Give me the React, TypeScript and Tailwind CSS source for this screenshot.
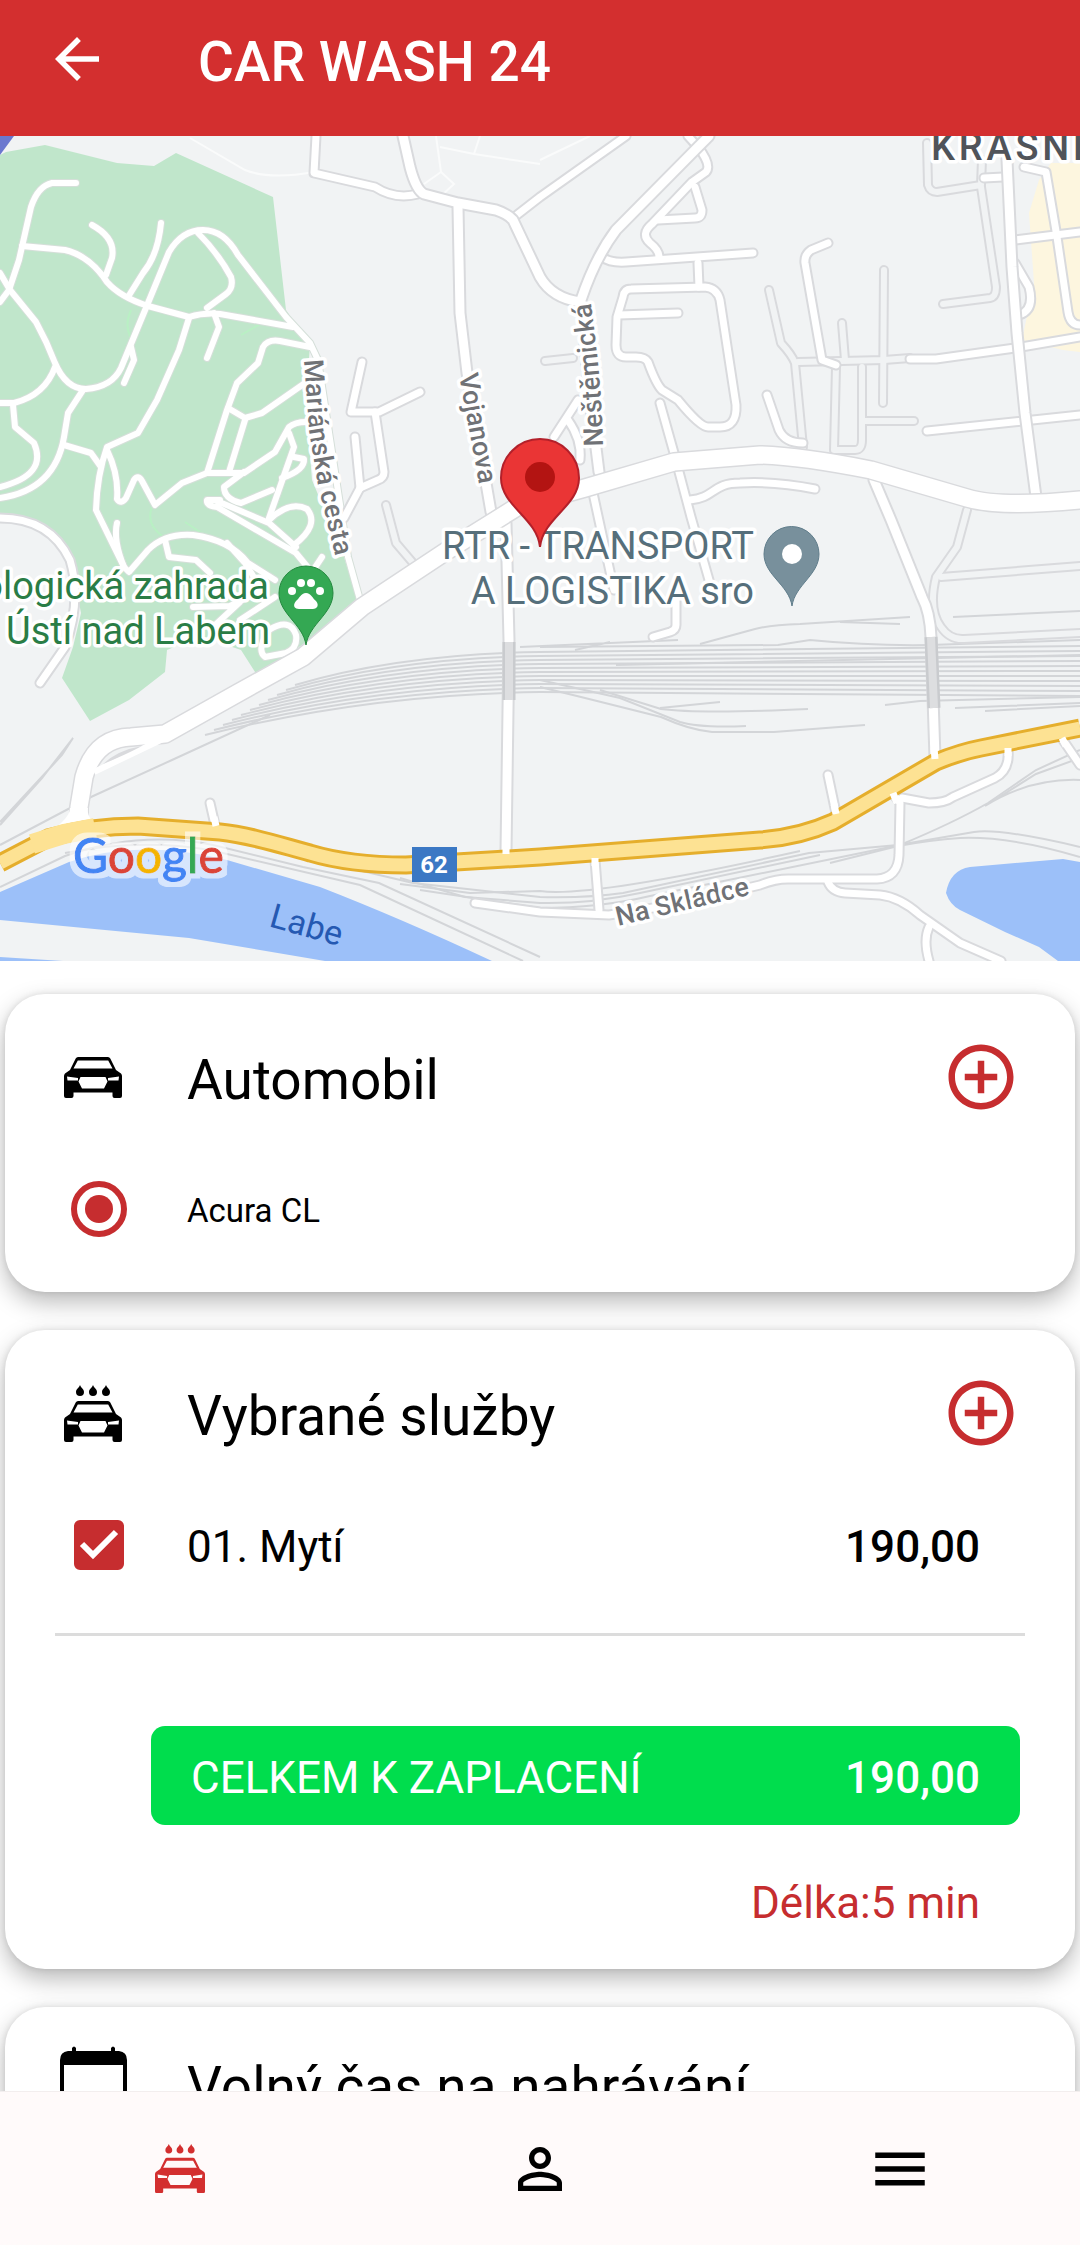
import React, { useState } from 'react';
import { MdAddCircleOutline, MdArrowBack, MdMenu, MdPersonOutline } from 'react-icons/md';

const CAR_PATH =
  'M11.7 1.5Q12.5 0 14 0H44Q45.5 0 46.3 1.5L52 13L57 16.5Q58 17.5 58 19V39Q58 41 56 41H50.5Q48.5 41 48.5 39V35.5H9.5V39Q9.5 41 7.5 41H2Q0 41 0 39V19Q0 17.5 1 16.5L6 13ZM13.8 3.5L9.5 11.5H48.5L44.2 3.5ZM3 19.5L3.5 23.5H14V21ZM55 19.5L54.5 23.5H44V21ZM16.5 20L14.5 24.5L18 31.5H40L43.5 24.5L41.5 20Z';

const PARK =
  'M0 155L6 152L45 145L117 163L154 166L176 153L273 197L286 310L310 345L306 400L312 480L344 557L358 602L320 633L257 675L241 650L200 636L167 650L165 672L129 700L90 721L62 678L73 647L81 613L74 577L62 547L34 523L0 517Z';

const WATER = [
  'M0 892L69 862Q140 838 227 860L320 887Q400 918 492 961H325L189 938L0 920Z',
  'M0 957L63 961H0Z',
  'M1080 862L1063 859L970 867Q950 870 946 893Q950 905 960 910L1005 932L1039 947L1058 961H1080Z'
];

const PARK_ROADS = [
  'M76 183H52Q38 186 31 207L19 260L10 287',
  'M22 246L65 250Q90 256 107 282Q120 297 148 306L189 317Q205 312 220 314L293 327',
  'M92 225Q116 238 112 258L106 275',
  'M161 223Q158 255 143 273L128 297',
  'M0 273L10 290L36 322Q47 342 55 363Q66 389 86 389Q112 387 121 368L148 303L169 252Q182 230 203 230Q224 230 238 255L286 317L310 343L318 360L348 557L360 600',
  'M0 302L9 290',
  'M198 233Q218 253 231 277Q234 288 226 294L207 308',
  'M189 318L179 350L157 400L138 433L107 447Q97 475 96 510L124 567L129 572L148 550Q165 533 193 535Q230 540 248 563L275 580',
  'M83 390L68 413L64 437Q55 490 0 498',
  'M55 367Q45 395 14 403H0',
  'M13 405L15 427L34 443Q48 475 0 487',
  'M64 445L91 453L101 467',
  'M107 450Q119 475 117 499Q121 505 126 498L134 480Q138 474 142 481L155 505L182 483L207 473H244L275 452L289 427Q295 422 306 422',
  'M207 473L227 410L237 383L258 363L263 347Q268 339 280 341L310 347',
  'M228 408L245 418L262 413L305 383',
  'M245 420L229 472',
  'M289 433L294 447L269 518',
  'M294 457L304 459Q305 470 282 478',
  'M244 472L224 487Q224 499 241 503L272 490',
  'M269 520Q290 500 307 509Q320 525 294 545',
  'M220 500L207 500Q206 506 217 507L296 553L310 570M217 501L269 523L296 547',
  'M117 523Q113 540 124 567',
  'M165 540L169 557L196 560L210 573',
  'M227 543L245 563L262 590',
  'M193 607L230 606L262 590M213 627L240 602M240 620L275 597',
  'M269 630Q290 617 296 635Q298 648 286 653L265 657Q256 650 269 630',
  'M322 557L312 572',
  'M214 313L219 327L207 358',
  'M131 347L134 360L124 383'
];

const STREETS = [
  'M0 518Q50 518 70 560Q82 600 65 647L40 683',
  'M316 136L314 173L375 187Q395 200 418 194',
  'M540 197L513 218M540 197L626 136',
  'M688 136L698 147Q712 165 706 172L692 182L652 224Q640 234 650 243Q659 250 659 257',
  'M695 187L702 210Q702 218 695 218L658 220',
  'M602 257Q610 263 626 262L753 253',
  'M698 263L699 287',
  'M617 317L623 297Q624 289 631 289L705 287Q717 288 720 300L736 405Q737 427 720 427H708Q700 427 678 400L662 390Q656 384 648 362Q645 357 636 357H626Q616 357 616 345Z',
  'M619 315L678 313',
  'M660 403L674 453L691 517L709 580',
  'M690 500C715 498 712 483 740 483Q775 481 815 489',
  'M593 493L614 590',
  'M676 600V625Q676 630 670 632L653 637',
  'M1024 167L1046 172L1057 237L1068 312Q1070 325 1080 325',
  'M984 178L1003 177',
  'M1015 263L1029 287Q1035 310 1019 315',
  'M828 243L811 250Q804 255 805 263L822 360L836 365',
  'M910 359L936 359L1015 348L1080 337',
  'M1015 240L1080 232',
  'M767 395L779 430Q785 443 803 443',
  'M927 431L1080 415',
  'M362 362L351 412H379L420 392',
  'M375 412L384 472Q384 478 378 480L360 488L344 518',
  'M355 437L360 488',
  'M578 400L554 437M568 420Q582 440 580 460',
  'M210 803L215 825',
  'M828 775L836 813',
  'M595 860L599 910',
  'M475 903L540 912L609 915Q680 905 760 885Q775 879 788 879H877Q898 878 899 855L900 803L894 795',
  'M902 798L929 803Q945 803 953 797L995 778Q1010 770 1008 750',
  'M828 882Q832 892 845 893L880 895Q900 897 920 915L960 943L1001 961',
  'M929 927Q923 940 929 961',
  'M1063 740L1080 765'
];

const WIDE_STREETS = [
  'M403 136L410 167Q416 190 424 194L458 203L496 210Q508 214 513 220L540 277Q552 298 580 302',
  'M458 207L460 313L467 373L491 512',
  'M709 136L698 147L616 230Q595 258 581 300L590 400L599 472',
  'M1007 160L1012 267L1017 333L1025 413L1036 497',
  'M874 480L891 520L922 597Q930 612 931 637L935 758',
  'M506 523L509 640L506 852'
];

// Service roads drawn in the same tone as the ground
const PALE_STREETS = [
  'M545 361L573 358',
  'M927 143L928 185Q930 192 937 192L981 185L982 160',
  'M981 187L996 287Q996 297 990 298L943 304',
  'M769 290L781 343Q792 355 795 363L803 447',
  'M798 362L884 360L910 358',
  'M884 270L883 403',
  'M842 323L845 360',
  'M836 367L834 450H855Q862 450 862 440V367',
  'M864 421L914 421',
  'M967 510L957 547L936 577Q928 610 941 627Q950 640 964 639L1080 633',
  'M941 577L1080 566',
  'M386 505L396 543L413 563'
];

const MAIN_ROAD =
  'M79 827V807L84 777Q95 738 131 737L165 734L238 693L303 657L362 607L448 550L517 507L585 488L674 462L760 455Q800 456 871 470L967 498Q1000 508 1080 500';

const HIGHWAY =
  'M0 863L48 838Q90 826 138 826L220 832C250 835 280 845 310 853Q350 865 406 865L540 857L760 840Q800 837 833 822L936 762Q960 752 981 748L1080 728';

const RAILS = [
  'M0 845L91 797L172 760L270 715',
  'M73 738L42 778L0 825M73 738L62 755L0 822',
  'M0 887L65 856Q140 830 213 845L303 867L379 883L540 957',
  'M65 853Q140 838 210 850L360 885L523 961',
  'M303 857L413 883L540 897Q590 898 623 893L809 853L898 845L974 832Q1000 828 1080 847',
  'M400 878L465 897L540 903Q590 904 640 893L820 855M830 863L898 846Q930 840 960 838Q1010 836 1080 857',
  'M400 884L470 893L540 891Q590 898 800 851',
  'M420 890L540 908Q600 908 650 896L900 845Q953 823 988 803L1036 770L1080 750',
  'M985 806L1036 774L1080 758M985 806Q1030 778 1080 780',
  'M540 687L581 697L661 717Q690 730 712 732H774L865 725',
  'M540 680L620 698L680 722Q700 728 746 726',
  'M600 690L661 709Q700 714 808 709',
  'M660 708L720 702',
  'M520 647L678 640M575 650L610 642',
  'M700 644L755 629Q770 625 800 624L910 617M840 622L900 624',
  'M540 647L778 645L810 640Q870 646 930 645L1080 640',
  'M953 617L1080 611',
  'M616 665L1080 655',
  'M885 705L920 701L1080 697',
  'M955 708L1080 703M985 711L1080 706'
];

// Yard tracks fan out from one point at the western end
const YARD = Array.from({ length: 11 }, (_, i) => {
  const x = 205 + i * 9;
  const y = 735 - i * 5;
  return `M${x} ${y}Q${370 + i * 3} ${694 - i * 4} 540 ${692 - i * 4}L1080 ${696 - i * 5}`;
});

function Roads({ paths, width, casing, fill = '#ffffff', edge = '#d9dadd' }: {
  paths: string[];
  width: number;
  casing: number;
  fill?: string;
  edge?: string;
}) {
  return (
    <g fill="none" strokeLinecap="round" strokeLinejoin="round">
      {paths.map(d => <path key={d} d={d} stroke={edge} strokeWidth={casing} />)}
      {paths.map(d => <path key={d} d={d} stroke={fill} strokeWidth={width} />)}
    </g>
  );
}

function PlaceMap() {
  return (
    <svg
      className="block w-full h-[825px] shrink-0 bg-[#f1f3f4] font-[Roboto,sans-serif]"
      viewBox="0 136 1080 825"
      preserveAspectRatio="xMidYMid slice"
      role="img"
      aria-label="Mapa"
    >
      <defs>
        <filter id="halo" x="-10%" y="-20%" width="120%" height="140%">
          <feMorphology in="SourceAlpha" operator="dilate" radius="5" result="grown" />
          <feFlood floodColor="#ffffff" floodOpacity="0.6" />
          <feComposite in2="grown" operator="in" result="rim" />
          <feMerge>
            <feMergeNode in="rim" />
            <feMergeNode in="SourceGraphic" />
          </feMerge>
        </filter>
      </defs>

      <path d={PARK} fill="#c0e6cb" />
      <path d="M1051 163H1080V352L1063 350L1022 340L1034 283L1029 213L1039 180Z" fill="#fdf6df" />
      {WATER.map(d => <path key={d} d={d} fill="#9cc0f9" />)}
      <path d="M0 136H14L0 155Z" fill="#6b78cf" />

      {/* Footpaths */}
      <g fill="none" stroke="#fafbfb" strokeWidth="2">
        <path d="M190 138L245 170Q270 180 314 172" />
        <path d="M436 136L441 172L454 184L441 196M424 184L441 172M440 147L474 154L540 164M474 154L480 136M540 160L590 136" />
      </g>
      <g fill="none" stroke="#b9f0c4" strokeWidth="2">
        <path d="M131 310Q124 325 131 338M262 323L241 335" />
        <path d="M152 507Q145 525 165 538M185 522L212 540" />
      </g>

      <g fill="none" stroke="#d3d5d8" strokeWidth="2">
        {RAILS.map(d => <path key={d} d={d} />)}
        {YARD.map(d => <path key={d} d={d} />)}
      </g>

      <Roads paths={PALE_STREETS} width={6} casing={10} fill="#f1f3f4" />
      <Roads paths={PARK_ROADS} width={6} casing={8} edge="#d5dfd9" />
      <Roads paths={STREETS} width={7} casing={11} />
      <Roads paths={WIDE_STREETS} width={9} casing={13} />
      <path d="M509 642V700M931 637L934 708" stroke="#c9cbce" strokeWidth="13" />
      <path d="M509 642V700M931 637L934 708" stroke="#dddee0" strokeWidth="8" />
      <Roads paths={[MAIN_ROAD]} width={17} casing={20} />
      <path d="M94 772L165 738" stroke="#ffffff" strokeWidth="6" />
      <path d="M103 764Q118 750 142 746Q125 755 103 764Z" fill="#d9dadd" />
      <path d="M32 842Q70 822 70 808H88Q86 816 98 828Z" fill="#ffffff" />

      <path d={HIGHWAY} fill="none" stroke="#e5ae2c" strokeWidth="19" />
      <path d={HIGHWAY} fill="none" stroke="#fde293" strokeWidth="13" />
      <path d="M32 844L64 834L95 828" fill="none" stroke="#fde293" strokeWidth="20" />
      <g stroke="#ffffff" strokeWidth="7">
        <path d="M214 817L216 826M834 804L836 814M506 845V854M934 748L935 759M595 858V866M893 793L897 803M1008 748V756M1062 738L1066 746" />
      </g>

      <g fill="none">
        <path id="marianska" d="M304 360L309 430L318 485L340 575" />
        <path id="vojanova" d="M459 375L482 500" />
        <path id="nestemicka" d="M603 446Q602 380 589 290" />
        <path id="skladce" d="M618 926L770 890" />
        <path id="labe" d="M268 926L360 952" />
      </g>
      <g
        fill="#707276"
        stroke="#ffffff"
        strokeWidth="7"
        strokeLinejoin="round"
        className="text-[27px] font-medium [paint-order:stroke]"
      >
        <text><textPath href="#marianska">Mariánská cesta</textPath></text>
        <text><textPath href="#vojanova">Vojanova</textPath></text>
        <text><textPath href="#nestemicka">Neštěmická</textPath></text>
        <text><textPath href="#skladce">Na Skládce</textPath></text>
      </g>
      <text fill="#2559b2" className="text-[34px]"><textPath href="#labe">Labe</textPath></text>

      <g stroke="#ffffff" strokeWidth="7" strokeLinejoin="round" className="text-[38px] [paint-order:stroke]">
        <text x="931" y="160" fill="#50545a" className="font-medium tracking-widest">KRÁSNÉ</text>
        <g fill="#566f7b" textAnchor="end">
          <text x="754" y="559">RTR - TRANSPORT</text>
          <text x="754" y="604">A LOGISTIKA sro</text>
        </g>
        <g fill="#2a7d46" textAnchor="end">
          <text x="269" y="599">Zoologická zahrada</text>
          <text x="270" y="644">Ústí nad Labem</text>
        </g>
      </g>

      <rect x="412" y="847" width="45" height="35" fill="#3b78c4" />
      <text x="434" y="873" fill="#ffffff" textAnchor="middle" className="text-[24px] font-bold">62</text>

      {/* Zoo */}
      <path d="M306 645C303 624 279 614 279 593A27 27 0 0 1 333 593C333 614 309 624 306 645Z" fill="#34a853" stroke="#23883e" />
      <g fill="#ffffff">
        <circle cx="292" cy="591" r="4" />
        <circle cx="301" cy="583" r="4" />
        <circle cx="311" cy="583" r="4" />
        <circle cx="320" cy="591" r="4" />
        <path d="M306 593C311 593 313 599 316 601C320 606 316 609 313 609H299C295 609 292 606 296 601C299 599 301 593 306 593Z" />
      </g>

      {/* Company */}
      <path d="M792 606C789 585 764 575 764 554A27 27 0 0 1 819 554C819 575 795 585 792 606Z" fill="#78909c" stroke="#607d8b" />
      <circle cx="792" cy="554" r="10" fill="#ffffff" />

      {/* Wash location */}
      <path d="M540 547C537 518 501 506 501 478A39 39 0 0 1 579 478C579 506 543 518 540 547Z" fill="#ea3535" stroke="#b3202a" strokeWidth="2" />
      <circle cx="540" cy="477" r="15" fill="#b31412" />

      <text x="73" y="873" strokeWidth="1" filter="url(#halo)" className="text-[48px] font-[Lato,sans-serif]">
        <tspan fill="#4285f4" stroke="#4285f4">G</tspan>
        <tspan fill="#db4437" stroke="#db4437">o</tspan>
        <tspan fill="#f4b400" stroke="#f4b400">o</tspan>
        <tspan fill="#4285f4" stroke="#4285f4">g</tspan>
        <tspan fill="#34a853" stroke="#34a853">l</tspan>
        <tspan fill="#db4437" stroke="#db4437">e</tspan>
      </text>
    </svg>
  );
}

function CarIcon() {
  return (
    <svg viewBox="0 0 58 41" className="w-[58px]" fill="currentColor" fillRule="evenodd" aria-hidden="true">
      <path d={CAR_PATH} />
    </svg>
  );
}

function CarWashIcon({ className }: { className: string }) {
  return (
    <svg viewBox="0 0 58 57" className={className} fill="currentColor" fillRule="evenodd" aria-hidden="true">
      {[16, 29, 42].map(x => (
        <path key={x} d={`M${x} 0C${x + 1} 3 ${x + 4} 4 ${x + 4} 7A4 4 0 0 1 ${x - 4} 7C${x - 4} 4 ${x - 1} 3 ${x} 0Z`} />
      ))}
      <path d={CAR_PATH} transform="translate(0 16)" />
    </svg>
  );
}

function CalendarIcon() {
  return (
    <svg viewBox="0 0 67 76" className="w-[67px]" fill="currentColor" aria-hidden="true">
      <path d="M12 5V2Q14 -1 16 2V5H51V2Q53 -1 55 2V5H59Q67 6 67 14V68Q67 76 59 76H8Q0 76 0 68V14Q0 6 8 5ZM4 19V68Q4 72 8 72H59Q63 72 63 68V19Z" fillRule="evenodd" />
    </svg>
  );
}

interface CardProps {
  icon: React.ReactNode;
  title: string;
  addLabel?: string;
  className: string;
  children?: React.ReactNode;
}

function Card({ icon, title, addLabel, className, children }: CardProps) {
  return (
    <section className={`bg-white rounded-[40px] px-[50px] shadow-[0_10px_24px_rgba(0,0,0,0.28),0_0_6px_rgba(0,0,0,0.1)] ${className}`}>
      <div className="flex items-center h-[78px]">
        <div className="w-[76px] mr-14 flex justify-center">{icon}</div>
        <h2 className="flex-1 pt-1.5 text-[55px] leading-[66px] whitespace-nowrap">{title}</h2>
        {addLabel && (
          <button type="button" aria-label={addLabel} className="w-[88px] flex justify-center text-[#c62d2f]">
            <MdAddCircleOutline size={78} />
          </button>
        )}
      </div>
      {children}
    </section>
  );
}

export default function App() {
  const [washing, setWashing] = useState(true);

  return (
    <div className="h-screen flex flex-col bg-white text-black font-[Roboto,sans-serif]">
      <header className="flex items-center h-[136px] shrink-0 px-11 pb-[18px] gap-[88px] bg-[#d32f2f] text-white">
        <button type="button" aria-label="Zpět">
          <MdArrowBack size={66} />
        </button>
        <h1 className="pt-1.5 text-[55px] leading-[66px] font-medium">CAR WASH 24</h1>
      </header>

      <main className="flex-1 min-h-0 overflow-y-auto [scrollbar-width:none]">
        <PlaceMap />

        <div className="flex flex-col gap-[38px] px-[5px] pt-[33px] pb-8">
          <Card icon={<CarIcon />} title="Automobil" addLabel="Přidat automobil" className="pt-11 pb-[50px]">
            <label className="flex items-center h-[66px] mt-[60px]">
              <span className="w-[88px] mr-11 flex justify-center">
                <input
                  type="radio"
                  name="car"
                  defaultChecked
                  className="appearance-none size-14 rounded-full border-6 border-[#c62d2f] p-2 bg-clip-content checked:bg-[#c62d2f]"
                />
              </span>
              <span className="pt-1 text-[33px] leading-[44px]">Acura CL</span>
            </label>
          </Card>

          <Card icon={<CarWashIcon className="w-[58px]" />} title="Vybrané služby" addLabel="Přidat službu" className="pt-11 pb-[33px]">
            <label className="flex items-center h-[66px] mt-[60px] text-[44px] leading-[66px]">
              <span className="relative w-[88px] mr-11 flex justify-center">
                <input
                  type="checkbox"
                  checked={washing}
                  onChange={e => setWashing(e.target.checked)}
                  className="appearance-none size-[50px] rounded-md border-6 border-[#c62d2f] checked:bg-[#c62d2f]"
                />
                {washing && (
                  <svg viewBox="0 0 50 50" className="absolute top-0 size-[50px] pointer-events-none" fill="none" stroke="#ffffff" strokeWidth="6" aria-hidden="true">
                    <path d="M8 24L19 35L42 12" />
                  </svg>
                )}
              </span>
              <span className="flex-1 pt-1">01. Mytí</span>
              <span className="pt-1 pr-[45px] font-medium">190,00</span>
            </label>

            <hr className="mt-[55px] border-t-3 border-[#dcdcdc]" />

            <div className="flex items-center justify-between h-[99px] mt-[90px] ml-24 mr-[5px] px-10 pt-1 rounded-[14px] bg-[#00dd4d] text-white text-[44px] leading-[66px]">
              <span>CELKEM K ZAPLACENÍ</span>
              <span className="font-medium">190,00</span>
            </div>

            <p className="mt-[45px] pr-[45px] text-right text-[44px] leading-[66px] text-[#c62d2f]">Délka:5 min</p>
          </Card>

          <Card icon={<CalendarIcon />} title="Volný čas na nahrávání" className="pt-[38px] pb-[50px]" />
        </div>
      </main>

      <nav className="grid grid-cols-3 h-[154px] mb-[13px] shrink-0 bg-[#fffafa] border-t border-[#f3eeee]">
        <a href="#wash" aria-label="Mytí" className="flex items-center justify-center text-[#d32f2f]">
          <CarWashIcon className="w-[50px]" />
        </a>
        <a href="#profile" aria-label="Profil" className="flex items-center justify-center">
          <MdPersonOutline size={66} />
        </a>
        <a href="#menu" aria-label="Menu" className="flex items-center justify-center">
          <MdMenu size={66} />
        </a>
      </nav>
    </div>
  );
}
